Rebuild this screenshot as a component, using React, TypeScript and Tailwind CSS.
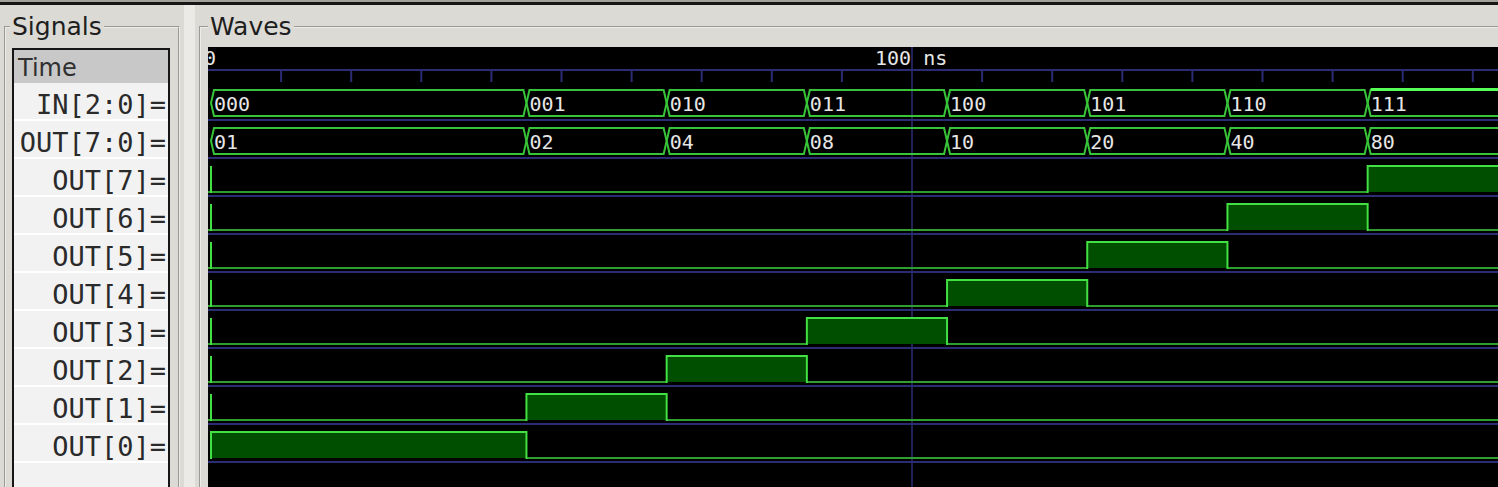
import React from 'react';

// timing: 100 ns sits at x=911 on the page, canvas starts at x=208
const SCALE = 7.01;
const X = (t: number) => 3 + SCALE * t;
const END = 200;
const CANVAS_W = 1290;
const CANVAS_H = 440;

const steps = [0, 45, 65, 85, 105, 125, 145, 165];
const inVals = ['000', '001', '010', '011', '100', '101', '110', '111'];
const outVals = ['01', '02', '04', '08', '10', '20', '40', '80'];

const signals = ['IN[2:0]=', 'OUT[7:0]=', 'OUT[7]=', 'OUT[6]=', 'OUT[5]=', 'OUT[4]=', 'OUT[3]=', 'OUT[2]=', 'OUT[1]=', 'OUT[0]='];

const NAVY = '#2c2c74';
const BUS = '#38c438';
const HIGH = '#42e042';
const LOW = '#2e9e2e';
const FILL = '#004f00';

const BusRow: React.FC<{ row: number; values: string[]; highlightLast?: boolean }> = ({ row, values, highlightLast }) => {
    const top = 43 + 38 * row;
    const bot = 69 + 38 * row;
    const mid = 56 + 38 * row;
    return (
        <g>
            {steps.map((t, i) => {
                const xs = X(t);
                const xe = i < steps.length - 1 ? X(steps[i + 1]) : X(END);
                const d = `M${xs},${mid} L${xs + 3},${top} L${xe - 3},${top} L${xe},${mid} L${xe - 3},${bot} L${xs + 3},${bot} Z`;
                return (
                    <g key={t}>
                        <path d={d} fill="none" stroke={BUS} strokeWidth={2} />
                        {highlightLast && i === steps.length - 1 && (
                            <line x1={xs + 3} y1={top - 0.5} x2={CANVAS_W} y2={top - 0.5} stroke="#55ff55" strokeWidth={3} />
                        )}
                        <text x={xs + 3} y={mid + 7.5} fill="#e6e6e6" fontSize={20}>
                            {values[i]}
                        </text>
                    </g>
                );
            })}
        </g>
    );
};

const BitRow: React.FC<{ row: number; a: number; b: number }> = ({ row, a, b }) => {
    const top = 43 + 38 * row;
    const low = 69 + 38 * row;
    const xa = X(a);
    const xb = b >= END ? CANVAS_W + 4 : X(b);
    return (
        <g>
            <rect x={xa} y={top} width={xb - xa} height={low - top} fill={FILL} />
            {a > 0 && <line x1={0} y1={low} x2={xa} y2={low} stroke={LOW} strokeWidth={2} />}
            {b < END && <line x1={xb} y1={low} x2={CANVAS_W} y2={low} stroke={LOW} strokeWidth={2} />}
            <line x1={xa} y1={top} x2={xb} y2={top} stroke={HIGH} strokeWidth={2} />
            <line x1={X(0)} y1={top} x2={X(0)} y2={low + 1} stroke={HIGH} strokeWidth={2} />
            <line x1={xa} y1={top - 1} x2={xa} y2={low + 1} stroke={HIGH} strokeWidth={2} />
            {b < END && <line x1={xb} y1={top - 1} x2={xb} y2={low + 1} stroke={HIGH} strokeWidth={2} />}
        </g>
    );
};

const WaveCanvas: React.FC = () => {
    const ticks = Array.from({ length: 18 }, (_, i) => (i + 1) * 10).filter((t) => t !== 100);
    return (
        <svg
            width={CANVAS_W}
            height={CANVAS_H}
            className="block bg-black font-['DejaVu_Sans_Mono',monospace]"
        >
            {/* time ruler */}
            <text x={-4} y={18} fill="#e6e6e6" fontSize={20}>0</text>
            <text x={667} y={18} fill="#e6e6e6" fontSize={20}>100 ns</text>
            <line x1={0} y1={23} x2={CANVAS_W} y2={23} stroke={NAVY} strokeWidth={2} />
            {ticks.map((t) => (
                <line key={t} x1={X(t)} y1={23} x2={X(t)} y2={35} stroke={NAVY} strokeWidth={2} />
            ))}

            {/* row separators */}
            {signals.map((_, k) => (
                <line key={k} x1={0} y1={73 + 38 * k} x2={CANVAS_W} y2={73 + 38 * k} stroke={NAVY} strokeWidth={2} />
            ))}

            {/* 100 ns marker */}
            <line x1={X(100)} y1={0} x2={X(100)} y2={CANVAS_H} stroke={NAVY} strokeWidth={1.5} />

            <BusRow row={0} values={inVals} highlightLast />
            <BusRow row={1} values={outVals} />

            {[7, 6, 5, 4, 3, 2, 1, 0].map((n, i) => {
                const a = n === 0 ? 0 : 45 + 20 * (n - 1);
                const b = n === 0 ? 45 : n === 7 ? END : 65 + 20 * (n - 1);
                return <BitRow key={n} row={i + 2} a={a} b={b} />;
            })}
        </svg>
    );
};

const App: React.FC = () => {
    return (
        <div className="w-[1498px] h-[487px] overflow-hidden bg-[#dcdad5] flex flex-col font-['DejaVu_Sans',sans-serif]">
            <div className="h-[2px] shrink-0 bg-[#a3a19c]" />
            <div className="h-[3px] shrink-0 bg-[#151515]" />

            <div className="flex flex-1 min-h-0 pl-[4px]">
                {/* Signals */}
                <fieldset className="mt-[7px] m-0 p-0 min-w-0 w-[176px] h-[520px] shrink-0 border-2 [border-style:groove]! border-[#eeece8]">
                    <legend className="ml-[4px] px-[2px] py-0 text-[25px] leading-[30px] text-[#1e1e1e]">Signals</legend>
                    <div className="pl-[6px] pr-[8px] pt-[6px]">
                        <div className="h-[480px] border-2 border-[#161616] bg-[#f2f2f2] flex flex-col">
                            <div className="h-[33px] shrink-0 bg-[#c8c8c8] pl-[4px] pt-[3px] flex items-center text-[24px] text-[#303030]">
                                Time
                            </div>
                            {signals.map((s) => (
                                <div
                                    key={s}
                                    className="h-[38px] shrink-0 border-b-2 border-white flex items-center justify-end pr-[2px] pt-[6px] font-['DejaVu_Sans_Mono',monospace] text-[27px] leading-none text-[#2a2a2a]"
                                >
                                    {s}
                                </div>
                            ))}
                        </div>
                    </div>
                </fieldset>

                {/* pane handle */}
                <div className="w-[19px] shrink-0 pl-[4px] flex">
                    <div className="w-[11px] bg-[#eceae6]" />
                </div>

                {/* Waves */}
                <fieldset className="mt-[7px] m-0 p-0 min-w-0 w-[1330px] h-[520px] shrink-0 border-2 [border-style:groove]! border-[#eeece8]">
                    <legend className="ml-[7px] px-[2px] py-0 text-[25px] leading-[30px] text-[#1e1e1e]">Waves</legend>
                    <div className="pl-[7px] pt-[5px]">
                        <WaveCanvas />
                    </div>
                </fieldset>
            </div>
        </div>
    );
};

export default App;
